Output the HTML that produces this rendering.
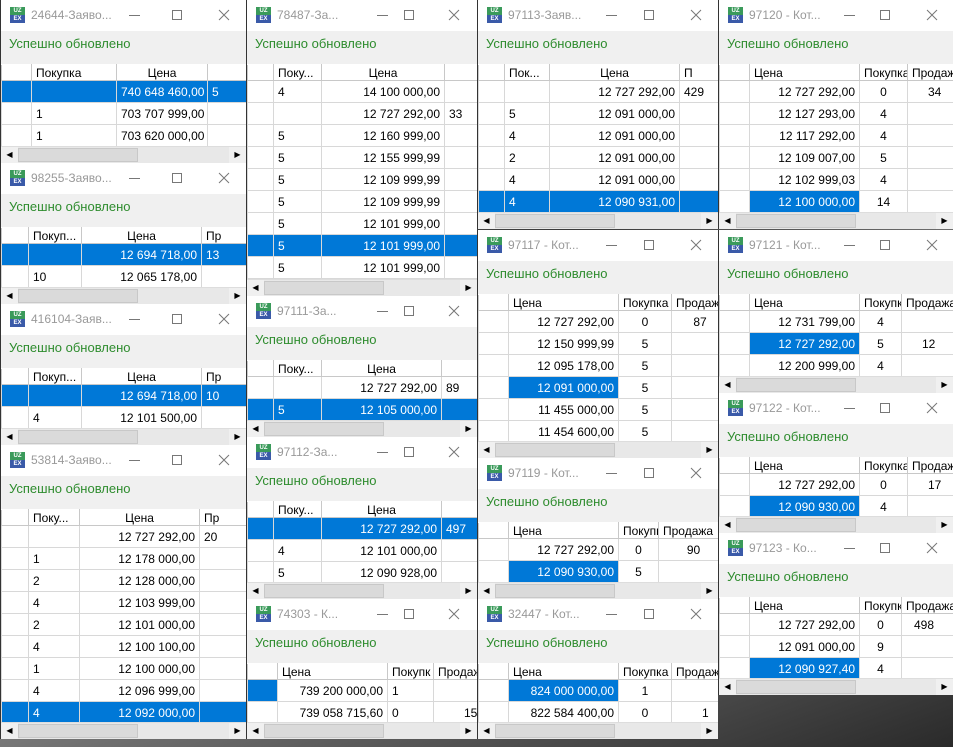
<!DOCTYPE html>
<html><head><meta charset="utf-8">
<style>
*{box-sizing:border-box;margin:0;padding:0}
body{width:953px;height:747px;overflow:hidden;position:relative;background:linear-gradient(160deg,#7a7a7a 0%,#3a3a3a 40%,#8a8a8a 60%,#2a2a2a 100%);font-family:"Liberation Sans",sans-serif;font-size:12px;color:#000}
.w{position:absolute;background:#f0f0f0;overflow:hidden;border-left:1px solid #333}
.t{position:absolute;left:0;top:0;right:0;height:31px;background:#fff}
.ic{position:absolute;left:9px;top:7px;width:15px;height:16px;font-size:6px;line-height:8px;color:#fff;text-align:center;font-weight:bold}
.ic b{display:block;height:8px;background:#3a9a5a}
.ic i{display:block;height:8px;background:#3a5aa8;font-style:normal}
.tt{position:absolute;left:30px;top:8px;color:#999;font-size:12px;white-space:nowrap}
.mn{position:absolute;top:15px;width:11px;height:1px;background:#777}
.mx{position:absolute;top:10px;width:10px;height:10px;border:1px solid #777}
.cl{position:absolute;top:9px;width:12px;height:12px}
.s{position:absolute;left:8px;top:36px;color:#2e8c2e;font-size:13px}
table{position:absolute;left:0;top:64px;border-collapse:collapse;table-layout:fixed;background:#fff}
td{border:1px solid #d8d8d8;height:22px;padding:0 4px;white-space:nowrap;overflow:hidden;font-size:12px}
tr.h td{height:16px;border-color:#fff #c8c8c8 #c8c8c8 #c8c8c8;color:#000}
td.r{text-align:right}td.c{text-align:center}
.sel{background:#0078d7;color:#fff}
.sb{position:absolute;left:0;bottom:0;right:0;height:17px;background:#e8e8e8;border-top:1px solid #ddd}
.sb .a{position:absolute;top:0;width:17px;height:16px;background:#f0f0f0;font-size:8px;line-height:16px;text-align:center;color:#000}
.sb .th{position:absolute;left:17px;top:1px;width:120px;height:14px;background:#dadada;border:1px solid #c8c8c8}
</style></head><body>

<!-- COLUMN 1 -->
<div class="w" style="left:0;top:0;width:246px;height:163px">
<div class="t"><div class="ic"><b>UZ</b><i>EX</i></div><div class="tt">24644-Заяво...</div><div class="mn" style="left:128px"></div><div class="mx" style="left:171px"></div><svg class="cl" style="left:217px" viewBox="0 0 12 12"><path d="M1 1L11 11M11 1L1 11" stroke="#777" stroke-width="1"/></svg></div>
<div class="s">Успешно обновлено</div>
<table style="width:266px"><colgroup><col style="width:30px"><col style="width:85px"><col style="width:91px"><col style="width:60px"></colgroup>
<tr class="h"><td></td><td>Покупка</td><td class="c">Цена</td><td></td></tr>
<tr class="sel"><td></td><td></td><td class="r">740 648 460,00</td><td>5</td></tr>
<tr><td></td><td>1</td><td class="r">703 707 999,00</td><td></td></tr>
<tr><td></td><td>1</td><td class="r">703 620 000,00</td><td></td></tr></table>
<div class="sb"><div class="a" style="left:0">◀</div><div class="th"></div><div class="a" style="right:0">▶</div></div></div>

<div class="w" style="left:0;top:163px;width:246px;height:141px">
<div class="t"><div class="ic"><b>UZ</b><i>EX</i></div><div class="tt">98255-Заяво...</div><div class="mn" style="left:128px"></div><div class="mx" style="left:171px"></div><svg class="cl" style="left:217px" viewBox="0 0 12 12"><path d="M1 1L11 11M11 1L1 11" stroke="#777" stroke-width="1"/></svg></div>
<div class="s">Успешно обновлено</div>
<table style="width:266px"><colgroup><col style="width:27px"><col style="width:53px"><col style="width:120px"><col style="width:66px"></colgroup>
<tr class="h"><td></td><td>Покуп...</td><td class="c">Цена</td><td>Пр</td></tr>
<tr class="sel"><td></td><td></td><td class="r">12 694 718,00</td><td>13</td></tr>
<tr><td></td><td>10</td><td class="r">12 065 178,00</td><td></td></tr></table>
<div class="sb"><div class="a" style="left:0">◀</div><div class="th"></div><div class="a" style="right:0">▶</div></div></div>

<div class="w" style="left:0;top:304px;width:246px;height:141px">
<div class="t"><div class="ic"><b>UZ</b><i>EX</i></div><div class="tt">416104-Заяв...</div><div class="mn" style="left:128px"></div><div class="mx" style="left:171px"></div><svg class="cl" style="left:217px" viewBox="0 0 12 12"><path d="M1 1L11 11M11 1L1 11" stroke="#777" stroke-width="1"/></svg></div>
<div class="s">Успешно обновлено</div>
<table style="width:266px"><colgroup><col style="width:27px"><col style="width:53px"><col style="width:120px"><col style="width:66px"></colgroup>
<tr class="h"><td></td><td>Покуп...</td><td class="c">Цена</td><td>Пр</td></tr>
<tr class="sel"><td></td><td></td><td class="r">12 694 718,00</td><td>10</td></tr>
<tr><td></td><td>4</td><td class="r">12 101 500,00</td><td></td></tr></table>
<div class="sb"><div class="a" style="left:0">◀</div><div class="th"></div><div class="a" style="right:0">▶</div></div></div>

<div class="w" style="left:0;top:445px;width:246px;height:294px">
<div class="t"><div class="ic"><b>UZ</b><i>EX</i></div><div class="tt">53814-Заяво...</div><div class="mn" style="left:128px"></div><div class="mx" style="left:171px"></div><svg class="cl" style="left:217px" viewBox="0 0 12 12"><path d="M1 1L11 11M11 1L1 11" stroke="#777" stroke-width="1"/></svg></div>
<div class="s">Успешно обновлено</div>
<table style="width:266px"><colgroup><col style="width:27px"><col style="width:51px"><col style="width:120px"><col style="width:68px"></colgroup>
<tr class="h"><td></td><td>Поку...</td><td class="c">Цена</td><td>Пр</td></tr>
<tr><td></td><td></td><td class="r">12 727 292,00</td><td>20</td></tr>
<tr><td></td><td>1</td><td class="r">12 178 000,00</td><td></td></tr>
<tr><td></td><td>2</td><td class="r">12 128 000,00</td><td></td></tr>
<tr><td></td><td>4</td><td class="r">12 103 999,00</td><td></td></tr>
<tr><td></td><td>2</td><td class="r">12 101 000,00</td><td></td></tr>
<tr><td></td><td>4</td><td class="r">12 100 100,00</td><td></td></tr>
<tr><td></td><td>1</td><td class="r">12 100 000,00</td><td></td></tr>
<tr><td></td><td>4</td><td class="r">12 096 999,00</td><td></td></tr>
<tr class="sel"><td></td><td>4</td><td class="r">12 092 000,00</td><td></td></tr></table>
<div class="sb"><div class="a" style="left:0">◀</div><div class="th"></div><div class="a" style="right:0">▶</div></div></div>

<!-- COLUMN 2 -->
<div class="w" style="left:246px;top:0;width:231px;height:296px">
<div class="t"><div class="ic"><b>UZ</b><i>EX</i></div><div class="tt">78487-За...</div><div class="mn" style="left:130px"></div><div class="mx" style="left:157px"></div><svg class="cl" style="left:201px" viewBox="0 0 12 12"><path d="M1 1L11 11M11 1L1 11" stroke="#777" stroke-width="1"/></svg></div>
<div class="s">Успешно обновлено</div>
<table style="width:240px"><colgroup><col style="width:26px"><col style="width:48px"><col style="width:123px"><col style="width:43px"></colgroup>
<tr class="h"><td></td><td>Поку...</td><td class="c">Цена</td><td></td></tr>
<tr><td></td><td>4</td><td class="r">14 100 000,00</td><td></td></tr>
<tr><td></td><td></td><td class="r">12 727 292,00</td><td>33</td></tr>
<tr><td></td><td>5</td><td class="r">12 160 999,00</td><td></td></tr>
<tr><td></td><td>5</td><td class="r">12 155 999,99</td><td></td></tr>
<tr><td></td><td>5</td><td class="r">12 109 999,99</td><td></td></tr>
<tr><td></td><td>5</td><td class="r">12 109 999,99</td><td></td></tr>
<tr><td></td><td>5</td><td class="r">12 101 999,00</td><td></td></tr>
<tr class="sel"><td></td><td>5</td><td class="r">12 101 999,00</td><td></td></tr>
<tr><td></td><td>5</td><td class="r">12 101 999,00</td><td></td></tr></table>
<div class="sb"><div class="a" style="left:0">◀</div><div class="th"></div><div class="a" style="right:0">▶</div></div></div>

<div class="w" style="left:246px;top:296px;width:231px;height:141px">
<div class="t"><div class="ic"><b>UZ</b><i>EX</i></div><div class="tt">97111-За...</div><div class="mn" style="left:130px"></div><div class="mx" style="left:157px"></div><svg class="cl" style="left:201px" viewBox="0 0 12 12"><path d="M1 1L11 11M11 1L1 11" stroke="#777" stroke-width="1"/></svg></div>
<div class="s">Успешно обновлено</div>
<table style="width:240px"><colgroup><col style="width:26px"><col style="width:48px"><col style="width:120px"><col style="width:46px"></colgroup>
<tr class="h"><td></td><td>Поку...</td><td class="c">Цена</td><td></td></tr>
<tr><td></td><td></td><td class="r">12 727 292,00</td><td>89</td></tr>
<tr class="sel"><td></td><td>5</td><td class="r">12 105 000,00</td><td></td></tr></table>
<div class="sb"><div class="a" style="left:0">◀</div><div class="th"></div><div class="a" style="right:0">▶</div></div></div>

<div class="w" style="left:246px;top:437px;width:231px;height:162px">
<div class="t"><div class="ic"><b>UZ</b><i>EX</i></div><div class="tt">97112-За...</div><div class="mn" style="left:130px"></div><div class="mx" style="left:157px"></div><svg class="cl" style="left:201px" viewBox="0 0 12 12"><path d="M1 1L11 11M11 1L1 11" stroke="#777" stroke-width="1"/></svg></div>
<div class="s">Успешно обновлено</div>
<table style="width:240px"><colgroup><col style="width:26px"><col style="width:48px"><col style="width:120px"><col style="width:46px"></colgroup>
<tr class="h"><td></td><td>Поку...</td><td class="c">Цена</td><td></td></tr>
<tr class="sel"><td></td><td></td><td class="r">12 727 292,00</td><td>497</td></tr>
<tr><td></td><td>4</td><td class="r">12 101 000,00</td><td></td></tr>
<tr><td></td><td>5</td><td class="r">12 090 928,00</td><td></td></tr></table>
<div class="sb"><div class="a" style="left:0">◀</div><div class="th"></div><div class="a" style="right:0">▶</div></div></div>

<div class="w" style="left:246px;top:599px;width:231px;height:140px">
<div class="t"><div class="ic"><b>UZ</b><i>EX</i></div><div class="tt">74303 - К...</div><div class="mn" style="left:130px"></div><div class="mx" style="left:157px"></div><svg class="cl" style="left:201px" viewBox="0 0 12 12"><path d="M1 1L11 11M11 1L1 11" stroke="#777" stroke-width="1"/></svg></div>
<div class="s">Успешно обновлено</div>
<table style="width:240px"><colgroup><col style="width:30px"><col style="width:110px"><col style="width:46px"><col style="width:54px"></colgroup>
<tr class="h"><td></td><td>Цена</td><td>Покупк</td><td>Продаж</td></tr>
<tr><td class="sel"></td><td class="r">739 200 000,00</td><td>1</td><td></td></tr>
<tr><td></td><td class="r">739 058 715,60</td><td>0</td><td style="padding-left:30px">15</td></tr></table>
<div class="sb"><div class="a" style="left:0">◀</div><div class="th"></div><div class="a" style="right:0">▶</div></div></div>

<!-- COLUMN 3 -->
<div class="w" style="left:477px;top:0;width:241px;height:229px">
<div class="t"><div class="ic"><b>UZ</b><i>EX</i></div><div class="tt">97113-Заяв...</div><div class="mn" style="left:128px"></div><div class="mx" style="left:166px"></div><svg class="cl" style="left:212px" viewBox="0 0 12 12"><path d="M1 1L11 11M11 1L1 11" stroke="#777" stroke-width="1"/></svg></div>
<div class="s">Успешно обновлено</div>
<table style="width:250px"><colgroup><col style="width:26px"><col style="width:45px"><col style="width:130px"><col style="width:49px"></colgroup>
<tr class="h"><td></td><td>Пок...</td><td class="c">Цена</td><td>П</td></tr>
<tr><td></td><td></td><td class="r">12 727 292,00</td><td>429</td></tr>
<tr><td></td><td>5</td><td class="r">12 091 000,00</td><td></td></tr>
<tr><td></td><td>4</td><td class="r">12 091 000,00</td><td></td></tr>
<tr><td></td><td>2</td><td class="r">12 091 000,00</td><td></td></tr>
<tr><td></td><td>4</td><td class="r">12 091 000,00</td><td></td></tr>
<tr class="sel"><td></td><td>4</td><td class="r">12 090 931,00</td><td></td></tr></table>
<div class="sb"><div class="a" style="left:0">◀</div><div class="th"></div><div class="a" style="right:0">▶</div></div></div>

<div class="w" style="left:477px;top:230px;width:241px;height:228px">
<div class="t"><div class="ic"><b>UZ</b><i>EX</i></div><div class="tt">97117 - Кот...</div><div class="mn" style="left:128px"></div><div class="mx" style="left:166px"></div><svg class="cl" style="left:212px" viewBox="0 0 12 12"><path d="M1 1L11 11M11 1L1 11" stroke="#777" stroke-width="1"/></svg></div>
<div class="s">Успешно обновлено</div>
<table style="width:250px"><colgroup><col style="width:30px"><col style="width:110px"><col style="width:53px"><col style="width:57px"></colgroup>
<tr class="h"><td></td><td>Цена</td><td>Покупка</td><td>Продажа</td></tr>
<tr><td></td><td class="r">12 727 292,00</td><td class="c">0</td><td class="c">87</td></tr>
<tr><td></td><td class="r">12 150 999,99</td><td class="c">5</td><td></td></tr>
<tr><td></td><td class="r">12 095 178,00</td><td class="c">5</td><td></td></tr>
<tr><td></td><td class="r sel">12 091 000,00</td><td class="c">5</td><td></td></tr>
<tr><td></td><td class="r">11 455 000,00</td><td class="c">5</td><td></td></tr>
<tr><td></td><td class="r">11 454 600,00</td><td class="c">5</td><td></td></tr></table>
<div class="sb"><div class="a" style="left:0">◀</div><div class="th"></div><div class="a" style="right:0">▶</div></div></div>

<div class="w" style="left:477px;top:458px;width:241px;height:141px">
<div class="t"><div class="ic"><b>UZ</b><i>EX</i></div><div class="tt">97119 - Кот...</div><div class="mn" style="left:128px"></div><div class="mx" style="left:166px"></div><svg class="cl" style="left:212px" viewBox="0 0 12 12"><path d="M1 1L11 11M11 1L1 11" stroke="#777" stroke-width="1"/></svg></div>
<div class="s">Успешно обновлено</div>
<table style="width:250px"><colgroup><col style="width:30px"><col style="width:110px"><col style="width:40px"><col style="width:70px"></colgroup>
<tr class="h"><td></td><td>Цена</td><td>Покупк</td><td>Продажа</td></tr>
<tr><td></td><td class="r">12 727 292,00</td><td class="c">0</td><td class="c">90</td></tr>
<tr><td></td><td class="r sel">12 090 930,00</td><td class="c">5</td><td></td></tr></table>
<div class="sb"><div class="a" style="left:0">◀</div><div class="th"></div><div class="a" style="right:0">▶</div></div></div>

<div class="w" style="left:477px;top:599px;width:241px;height:140px">
<div class="t"><div class="ic"><b>UZ</b><i>EX</i></div><div class="tt">32447 - Кот...</div><div class="mn" style="left:128px"></div><div class="mx" style="left:166px"></div><svg class="cl" style="left:212px" viewBox="0 0 12 12"><path d="M1 1L11 11M11 1L1 11" stroke="#777" stroke-width="1"/></svg></div>
<div class="s">Успешно обновлено</div>
<table style="width:250px"><colgroup><col style="width:30px"><col style="width:110px"><col style="width:53px"><col style="width:57px"></colgroup>
<tr class="h"><td></td><td>Цена</td><td>Покупка</td><td>Продажа</td></tr>
<tr><td></td><td class="r sel">824 000 000,00</td><td class="c">1</td><td></td></tr>
<tr><td></td><td class="r">822 584 400,00</td><td class="c">0</td><td style="padding-left:30px">1</td></tr></table>
<div class="sb"><div class="a" style="left:0">◀</div><div class="th"></div><div class="a" style="right:0">▶</div></div></div>

<!-- COLUMN 4 -->
<div class="w" style="left:718px;top:0;width:235px;height:229px">
<div class="t"><div class="ic"><b>UZ</b><i>EX</i></div><div class="tt">97120 - Кот...</div><div class="mn" style="left:125px"></div><div class="mx" style="left:161px"></div><svg class="cl" style="left:207px" viewBox="0 0 12 12"><path d="M1 1L11 11M11 1L1 11" stroke="#777" stroke-width="1"/></svg></div>
<div class="s">Успешно обновлено</div>
<table style="width:250px"><colgroup><col style="width:30px"><col style="width:110px"><col style="width:48px"><col style="width:62px"></colgroup>
<tr class="h"><td></td><td>Цена</td><td>Покупка</td><td>Продажа</td></tr>
<tr><td></td><td class="r">12 727 292,00</td><td class="c">0</td><td style="padding-left:20px">34</td></tr>
<tr><td></td><td class="r">12 127 293,00</td><td class="c">4</td><td></td></tr>
<tr><td></td><td class="r">12 117 292,00</td><td class="c">4</td><td></td></tr>
<tr><td></td><td class="r">12 109 007,00</td><td class="c">5</td><td></td></tr>
<tr><td></td><td class="r">12 102 999,03</td><td class="c">4</td><td></td></tr>
<tr><td></td><td class="r sel">12 100 000,00</td><td class="c">14</td><td></td></tr></table>
<div class="sb"><div class="a" style="left:0">◀</div><div class="th"></div><div class="a" style="right:0">▶</div></div></div>

<div class="w" style="left:718px;top:230px;width:235px;height:163px">
<div class="t"><div class="ic"><b>UZ</b><i>EX</i></div><div class="tt">97121 - Кот...</div><div class="mn" style="left:125px"></div><div class="mx" style="left:161px"></div><svg class="cl" style="left:207px" viewBox="0 0 12 12"><path d="M1 1L11 11M11 1L1 11" stroke="#777" stroke-width="1"/></svg></div>
<div class="s">Успешно обновлено</div>
<table style="width:250px"><colgroup><col style="width:30px"><col style="width:110px"><col style="width:42px"><col style="width:68px"></colgroup>
<tr class="h"><td></td><td>Цена</td><td>Покупк</td><td>Продажа</td></tr>
<tr><td></td><td class="r">12 731 799,00</td><td class="c">4</td><td></td></tr>
<tr><td></td><td class="r sel">12 727 292,00</td><td class="c">5</td><td style="padding-left:20px">12</td></tr>
<tr><td></td><td class="r">12 200 999,00</td><td class="c">4</td><td></td></tr></table>
<div class="sb"><div class="a" style="left:0">◀</div><div class="th"></div><div class="a" style="right:0">▶</div></div></div>

<div class="w" style="left:718px;top:393px;width:235px;height:140px">
<div class="t"><div class="ic"><b>UZ</b><i>EX</i></div><div class="tt">97122 - Кот...</div><div class="mn" style="left:125px"></div><div class="mx" style="left:161px"></div><svg class="cl" style="left:207px" viewBox="0 0 12 12"><path d="M1 1L11 11M11 1L1 11" stroke="#777" stroke-width="1"/></svg></div>
<div class="s">Успешно обновлено</div>
<table style="width:250px"><colgroup><col style="width:30px"><col style="width:110px"><col style="width:48px"><col style="width:62px"></colgroup>
<tr class="h"><td></td><td>Цена</td><td>Покупка</td><td>Продажа</td></tr>
<tr><td></td><td class="r">12 727 292,00</td><td class="c">0</td><td style="padding-left:20px">17</td></tr>
<tr><td></td><td class="r sel">12 090 930,00</td><td class="c">4</td><td></td></tr></table>
<div class="sb"><div class="a" style="left:0">◀</div><div class="th"></div><div class="a" style="right:0">▶</div></div></div>

<div class="w" style="left:718px;top:533px;width:235px;height:162px">
<div class="t"><div class="ic"><b>UZ</b><i>EX</i></div><div class="tt">97123 - Ко...</div><div class="mn" style="left:125px"></div><div class="mx" style="left:161px"></div><svg class="cl" style="left:207px" viewBox="0 0 12 12"><path d="M1 1L11 11M11 1L1 11" stroke="#777" stroke-width="1"/></svg></div>
<div class="s">Успешно обновлено</div>
<table style="width:250px"><colgroup><col style="width:30px"><col style="width:110px"><col style="width:42px"><col style="width:68px"></colgroup>
<tr class="h"><td></td><td>Цена</td><td>Покупк</td><td>Продажа</td></tr>
<tr><td></td><td class="r">12 727 292,00</td><td class="c">0</td><td style="padding-left:12px">498</td></tr>
<tr><td></td><td class="r">12 091 000,00</td><td class="c">9</td><td></td></tr>
<tr><td></td><td class="r sel">12 090 927,40</td><td class="c">4</td><td></td></tr></table>
<div class="sb"><div class="a" style="left:0">◀</div><div class="th"></div><div class="a" style="right:0">▶</div></div></div>

</body></html>
